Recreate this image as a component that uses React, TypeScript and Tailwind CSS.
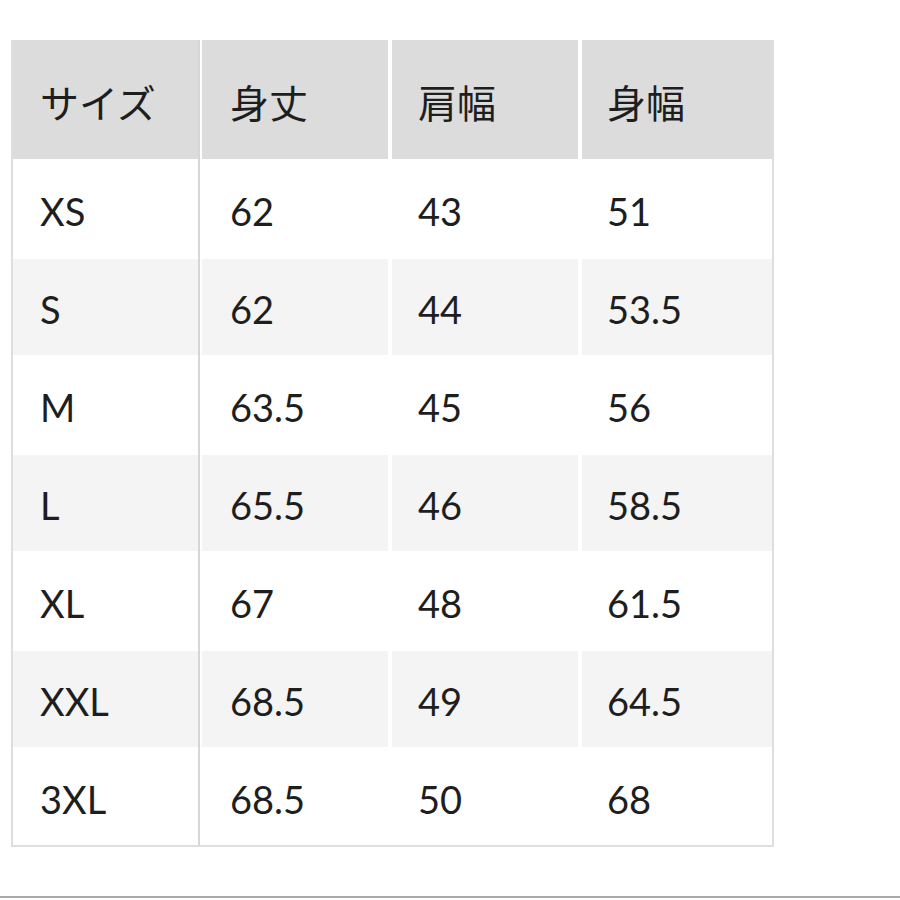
import React from "react";

const header = ["サイズ", "身丈", "肩幅", "身幅"];
const rows: string[][] = [
  ["XS", "62", "43", "51"],
  ["S", "62", "44", "53.5"],
  ["M", "63.5", "45", "56"],
  ["L", "65.5", "46", "58.5"],
  ["XL", "67", "48", "61.5"],
  ["XXL", "68.5", "49", "64.5"],
  ["3XL", "68.5", "50", "68"],
];

const pad = ["pl-[27px]", "pl-[28px] mx-[2px]", "pl-[26px] mx-[2px]", "pl-[25px] ml-[2px]"];

export default function App() {
  return (
    <div
      className="w-[900px] h-[900px] bg-white relative overflow-hidden text-[#1e1e1e]"
      style={{ fontFamily: "Lato, 'Noto Sans CJK JP', sans-serif" }}
    >
      <div className="pt-[40px] pl-[11px]">
        <div className="w-[763px] border-l-2 border-r-2 border-b-2 border-[#dedede]">
          <div className="grid grid-cols-[185px_2px_190px_190px_192px] gap-y-[2px]">
            {header.map((h, i) => (
              <React.Fragment key={h}>
                <div
                  className={"h-[119px] bg-[#dcdcdc] flex items-center pt-[4px] text-[39px] font-normal " + pad[i]}
                  style={{ fontFamily: "'Noto Sans CJK JP', sans-serif" }}
                >
                  {h}
                </div>
                {i === 0 && <div className="bg-[#d6d6d6] row-span-8" />}
              </React.Fragment>
            ))}
            {rows.map((r, ri) =>
              r.map((c, ci) => (
                <div
                  key={ri + "-" + ci}
                  className={
                    "h-[96px] flex items-center pt-[4px] text-[38px] font-normal " +
                    (ri % 2 === 1 ? "bg-[#f4f4f4] " : "bg-white ") +
                    pad[ci]
                  }
                >
                  {c}
                </div>
              ))
            )}
          </div>
        </div>
      </div>
      <div className="absolute left-0 right-0 top-[896px] h-[2px] bg-[#aaaaaa]" />
    </div>
  );
}
